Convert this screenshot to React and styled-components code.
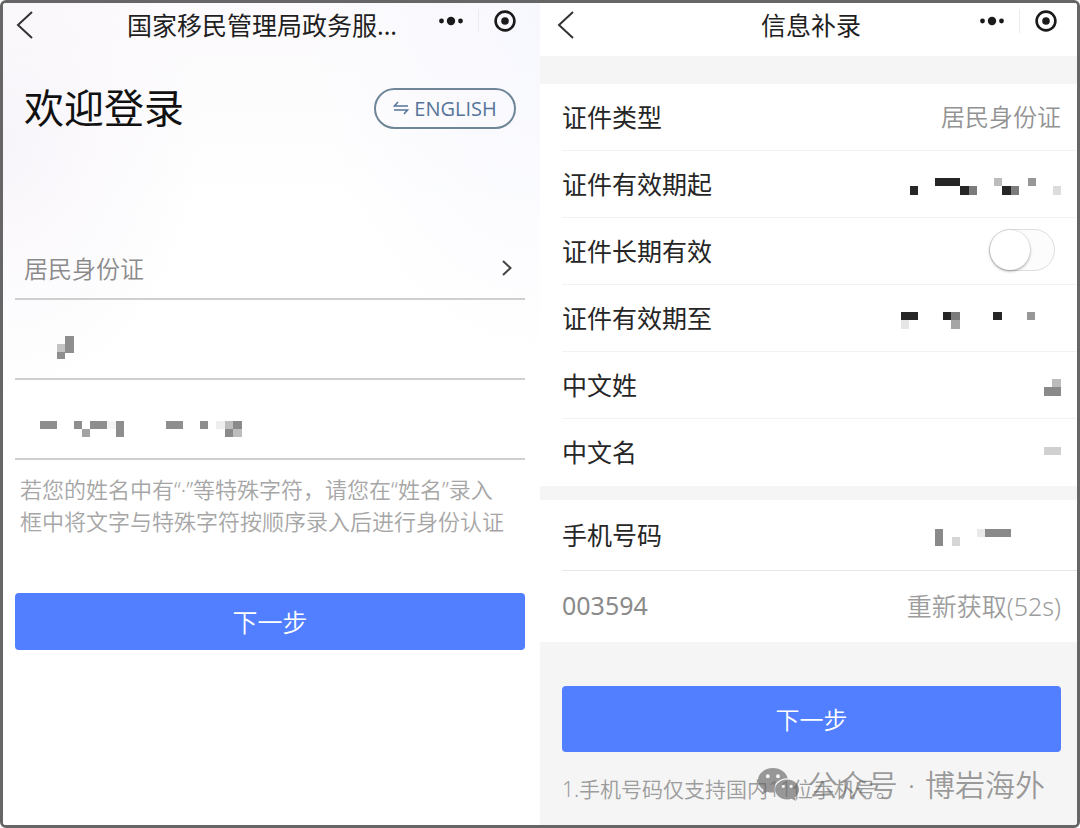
import styled, { createGlobalStyle } from "styled-components";
import { useState } from "react";

const GlobalStyle = createGlobalStyle`
  * {
    box-sizing: border-box;
  }
  body {
    margin: 0;
    background: #fff;
    color: #1f1f1f;
    font-family: "Noto Sans", "Noto Sans CJK SC", sans-serif;
  }
  button, input, select {
    font-family: inherit;
    margin: 0;
  }
`;

const Frame = styled.div`
  display: grid;
  grid-template-columns: 1fr 1fr;
  min-height: 100vh;
  border: 3px solid #666;
  border-radius: 6px;
  overflow: hidden;
`;

const Panel = styled.section`
  display: flex;
  flex-direction: column;
  min-width: 0;
`;

const LoginPanel = styled(Panel)`
  background:
    radial-gradient(ellipse at 0 140px, #f8f5fa, rgba(255, 255, 255, 0) 200px),
    radial-gradient(ellipse at 100% 0, #f7f8fe, rgba(255, 255, 255, 0) 240px),
    linear-gradient(#fcfafc, #fff 200px);
`;

const InfoPanel = styled(Panel)`
  background: #f5f5f5;
`;

const Header = styled.header`
  display: grid;
  grid-template-columns: 1fr auto 1fr;
  align-items: start;
  height: 53px;
  padding: ${props => props.$wide ? '0 20px 0 17px' : '0 24px 0 13px'};
  background: ${props => props.$solid ? '#fff' : 'transparent'};
`;

const Title = styled.h1`
  margin: 0;
  padding: ${props => props.$truncated ? '0 8px 0 0' : '0 0 0 8px'};
  font-size: 25px;
  font-weight: 400;
  line-height: 44px;
  white-space: nowrap;
`;

const IconButton = styled.button`
  display: flex;
  align-items: center;
  justify-self: start;
  border: none;
  padding: 0;
  background: none;
  cursor: pointer;
`;

const BackButton = styled(IconButton)`
  height: 44px;
`;

const Capsule = styled.div`
  display: flex;
  align-items: center;
  justify-self: end;
  height: 36px;
`;

const CapsuleDivider = styled.span`
  width: 1px;
  height: 24px;
  margin: 0 15px;
  background: #ececee;
`;

const Welcome = styled.div`
  display: flex;
  align-items: center;
  justify-content: space-between;
  padding: 22px 24px 0 21px;
`;

const WelcomeTitle = styled.h2`
  margin: 0;
  font-size: 40px;
  font-weight: 400;
  line-height: 60px;
  color: #111;
`;

const LanguageButton = styled.button`
  display: flex;
  align-items: center;
  justify-content: center;
  gap: 5px;
  width: 142px;
  height: 41px;
  border: 2px solid #6f8698;
  border-radius: 21px;
  padding: 0;
  background: transparent;
  color: #56749a;
  font-family: "Open Sans", sans-serif;
  font-size: 20px;
  cursor: pointer;
`;

const Form = styled.form`
  padding: 100px 15px 0 12px;
`;

const Field = styled.div`
  position: relative;
  display: flex;
  align-items: center;
  height: ${props => props.$first ? '62px' : '80px'};
  border-bottom: 2px solid #cfcfcf;
`;

const FieldInput = styled.input`
  width: 100%;
  height: 100%;
  border: none;
  outline: none;
  padding: 0 9px;
  background: transparent;
  font-size: 24px;
`;

const FieldSelect = styled.select`
  width: 100%;
  height: 100%;
  appearance: none;
  border: none;
  outline: none;
  padding: 0 9px;
  background: transparent;
  color: #8a8a8a;
  font-size: 24px;
  font-weight: 350;
`;

const SelectArrow = styled.svg`
  position: absolute;
  right: 12px;
  pointer-events: none;
`;

const FieldMask = styled.span`
  position: absolute;
  left: 25px;
  top: 20px;
  bottom: 0;
  display: flex;
  align-items: center;
  pointer-events: none;
`;

const Hint = styled.p`
  margin: 0;
  padding: 13px 16px 0 5px;
  color: #a6a6a6;
  font-size: 22px;
  font-weight: 350;
  line-height: 32px;
`;

const PrimaryButton = styled.button`
  display: block;
  width: 100%;
  height: ${props => props.$tall ? '66px' : '57px'};
  border: none;
  border-radius: 4px;
  padding: 0 0 2px;
  background: #517fff;
  color: #fff;
  font-size: ${props => props.$tall ? '24px' : '25px'};
  font-weight: 350;
  cursor: pointer;
`;

const SubmitRow = styled.div`
  padding-top: 56px;
`;

const Group = styled.div`
  margin-top: ${props => props.$spacing};
  background: #fff;
`;

const Row = styled.div`
  display: flex;
  align-items: center;
  justify-content: space-between;
  height: ${props => props.$tall ? '71px' : '67px'};
  margin-left: 22px;
  padding: 0 16px 3px 0;
  border-bottom: 1px solid ${props => props.$tall ? '#e6e6e6' : '#f3f3f3'};
  &:last-child {
    border-bottom: none;
  }
`;

const RowLabel = styled.label`
  font-size: 25px;
  color: #262626;
`;

const RowValue = styled.span`
  font-size: 24px;
  font-weight: 350;
  color: #929292;
`;

const RowMask = styled.span`
  display: flex;
  padding-top: 8px;
`;

const CodeInput = styled.input`
  flex: 1;
  min-width: 0;
  height: 100%;
  border: none;
  outline: none;
  padding: 0;
  background: transparent;
  color: #8a8a8a;
  font-size: 25px;
`;

const ResendButton = styled.button`
  border: none;
  padding: 0;
  background: none;
  color: #9c9c9c;
  font-size: 25px;
  font-weight: 350;
`;

const Toggle = styled.input`
  appearance: none;
  display: flex;
  width: 66px;
  height: 42px;
  margin: 0 6px 0 0;
  border: 1px solid #dedede;
  border-radius: 21px;
  background: ${props => props.checked ? '#517fff' : '#fcfcfc'};
  cursor: pointer;
  &::before {
    content: "";
    width: 40px;
    height: 40px;
    margin-left: ${props => props.checked ? '24px' : '0'};
    border-radius: 50%;
    background: #fff;
    box-shadow: 0 1px 3px rgba(0, 0, 0, 0.4);
  }
`;

const Footer = styled.footer`
  position: relative;
  flex: 1;
  padding: 44px 16px 0 22px;
`;

const Note = styled.p`
  margin: 0;
  padding-top: 21px;
  color: #9c9c9c;
  font-size: 21px;
  font-weight: 350;
  line-height: 32px;
  white-space: nowrap;
`;

const Watermark = styled.div`
  position: absolute;
  right: 32px;
  bottom: 20px;
  display: flex;
  align-items: center;
  gap: 8px;
  color: rgba(100, 100, 100, 0.65);
  font-size: 30px;
  font-weight: 350;
  line-height: 40px;
  white-space: nowrap;
`;

const WatermarkText = styled.span`
  display: flex;
  gap: 10px;
`;

// cells are [column, row, columns, rows, colour]
function Mosaic({cols, rows, cells}) {
  return (
    <svg
      width={cols * 8.4}
      height={rows * 8.4}
      viewBox={`0 0 ${cols} ${rows}`}
      shapeRendering="crispEdges"
      aria-hidden="true"
    >
      {cells.map(([x, y, w, h, fill]) => (
        <rect key={x + '-' + y} x={x} y={y} width={w} height={h} fill={fill} />
      ))}
    </svg>
  );
}

const nameCells = [
  [2, 0.9, 1, 1, '#c4c4c4'], [2, 1.9, 1, 0.8, '#8e8e8e'], [3, 0, 1, 2, '#8e8e8e'],
];

const idCells = [
  [0, 0, 2, 1, '#8e8e8e'], [4, 0, 1, 1, '#8e8e8e'], [5, 1, 1, 1, '#a3a3a3'],
  [6, 0, 2, 1, '#8e8e8e'], [8, 0, 1, 1, '#f3f3f3'], [9, 0, 1, 2, '#8e8e8e'],
  [15, 0, 2, 1, '#8e8e8e'], [19, 0, 1, 1, '#8e8e8e'], [21, 0, 1, 1, '#eeeeee'],
  [22, 0, 1, 1, '#bdbdbd'], [23, 0, 1, 1, '#8a8a8a'], [22, 1, 1, 1, '#8a8a8a'],
  [23, 1, 1, 1, '#bdbdbd'],
];

const startCells = [
  [0, 1, 1, 1, '#262626'], [3, 0, 3, 1, '#262626'], [6, 1, 1, 1, '#262626'],
  [7, 1, 1, 1, '#7b7b7b'], [10, 0, 1, 1, '#bcbcbc'], [11, 1, 1, 1, '#262626'],
  [12, 1, 1, 1, '#7b7b7b'], [14, 0, 1, 1, '#979797'], [17, 1, 1, 1, '#dcdcdc'],
];

const endCells = [
  [0, 0, 2, 1, '#262626'], [0, 1, 1, 1, '#e6e6e6'], [5, 0, 1, 1, '#262626'],
  [6, 0, 1, 1, '#7b7b7b'], [6, 1, 1, 1, '#a6a6a6'], [11, 0, 1, 1, '#262626'],
  [15, 0, 1, 1, '#979797'],
];

const surnameCells = [[1, 0, 1, 1, '#bcbcbc'], [0, 1, 2, 1, '#8a8a8a']];

const givenNameCells = [[0, 0, 2, 1, '#d0d0d0']];

const phoneCells = [
  [0, 0, 1, 2, '#8a8a8a'], [2, 1, 1, 1, '#d6d6d6'], [5, 0, 1, 1, '#e9e9e9'],
  [6, 0, 3, 1, '#8a8a8a'],
];

function NavBar({title, wide, solid}) {
  return (
    <Header $wide={wide} $solid={solid}>
      <BackButton type="button" aria-label="返回">
        <svg width="18" height="28" viewBox="0 0 18 28" fill="none" stroke="#333" strokeWidth="2">
          <path d="M16 1 L2 14 L16 27" />
        </svg>
      </BackButton>
      <Title $truncated={!wide}>{title}</Title>
      <Capsule>
        <IconButton type="button" aria-label="更多">
          <svg width="24" height="10" viewBox="0 0 24 10" fill="#1a1a1a">
            <circle cx="2.5" cy="5" r="2.4" />
            <circle cx="12" cy="5" r="4.2" />
            <circle cx="21.5" cy="5" r="2.4" />
          </svg>
        </IconButton>
        <CapsuleDivider />
        <IconButton type="button" aria-label="关闭">
          <svg width="22" height="22" viewBox="0 0 22 22" fill="none">
            <circle cx="11" cy="11" r="9.4" stroke="#1a1a1a" strokeWidth="2.6" />
            <circle cx="11" cy="11" r="3.8" fill="#1a1a1a" />
          </svg>
        </IconButton>
      </Capsule>
    </Header>
  );
}

function Login() {
  return (
    <LoginPanel>
      <NavBar title="国家移民管理局政务服..." />
      <Welcome>
        <WelcomeTitle>欢迎登录</WelcomeTitle>
        <LanguageButton type="button">
          <svg width="16" height="14" viewBox="0 0 16 14" fill="none" stroke="currentColor" strokeWidth="1.5">
            <path d="M5 1 L1.5 5 H15 M1 9 H14.5 L11 13" />
          </svg>
          ENGLISH
        </LanguageButton>
      </Welcome>
      <Form onSubmit={e => e.preventDefault()}>
        <Field $first>
          <FieldSelect aria-label="证件类型" defaultValue="id">
            <option value="id">居民身份证</option>
          </FieldSelect>
          <SelectArrow width="12" height="16" viewBox="0 0 12 16" fill="none" stroke="#444" strokeWidth="2">
            <path d="M2 1 L9.5 8 L2 15" />
          </SelectArrow>
        </Field>
        <Field>
          <FieldInput aria-label="姓名" />
          <FieldMask><Mosaic cols={4} rows={3} cells={nameCells} /></FieldMask>
        </Field>
        <Field>
          <FieldInput aria-label="证件号码" />
          <FieldMask><Mosaic cols={24} rows={2} cells={idCells} /></FieldMask>
        </Field>
        <Hint>若您的姓名中有“·”等特殊字符，请您在“姓名”录入框中将文字与特殊字符按顺序录入后进行身份认证</Hint>
        <SubmitRow>
          <PrimaryButton type="submit">下一步</PrimaryButton>
        </SubmitRow>
      </Form>
    </LoginPanel>
  );
}

function Info() {
  const [longTerm, setLongTerm] = useState(false);

  return (
    <InfoPanel>
      <NavBar title="信息补录" wide solid />
      <Group $spacing="28px">
        <Row>
          <RowLabel as="span">证件类型</RowLabel>
          <RowValue>居民身份证</RowValue>
        </Row>
        <Row>
          <RowLabel as="span">证件有效期起</RowLabel>
          <RowMask><Mosaic cols={18} rows={2} cells={startCells} /></RowMask>
        </Row>
        <Row>
          <RowLabel htmlFor="long-term">证件长期有效</RowLabel>
          <Toggle
            id="long-term"
            type="checkbox"
            checked={longTerm}
            onChange={e => setLongTerm(e.target.checked)}
          />
        </Row>
        <Row>
          <RowLabel as="span">证件有效期至</RowLabel>
          <RowMask><Mosaic cols={19} rows={2} cells={endCells} /></RowMask>
        </Row>
        <Row>
          <RowLabel as="span">中文姓</RowLabel>
          <RowMask><Mosaic cols={2} rows={2} cells={surnameCells} /></RowMask>
        </Row>
        <Row>
          <RowLabel as="span">中文名</RowLabel>
          <Mosaic cols={2} rows={1} cells={givenNameCells} />
        </Row>
      </Group>
      <Group $spacing="14px">
        <Row $tall>
          <RowLabel as="span">手机号码</RowLabel>
          <RowMask><Mosaic cols={15} rows={2} cells={phoneCells} /></RowMask>
        </Row>
        <Row $tall>
          <CodeInput aria-label="验证码" defaultValue="003594" />
          <ResendButton type="button" disabled>重新获取(52s)</ResendButton>
        </Row>
      </Group>
      <Footer>
        <PrimaryButton type="button" $tall>下一步</PrimaryButton>
        <Note>1.手机号码仅支持国内11位手机号。</Note>
        <Watermark>
          <svg width="42" height="34" viewBox="0 0 42 34" fill="currentColor" aria-hidden="true">
            <path
              fillRule="evenodd"
              d="M15 0 C6.7 0 0 5.5 0 12.3 C0 16.2 2.2 19.6 5.6 21.9 L4.2 26.2 L9.2 23.7 C11 24.2 12.9 24.6 15 24.6 L16.2 24.5 C15.9 23.5 15.8 22.5 15.8 21.5 C15.8 15.3 21.7 10.3 29 10.3 L29.7 10.3 C28.4 4.4 22.3 0 15 0 Z M9.8 6.2 a2 2 0 1 1 0 4 a2 2 0 1 1 0 -4 Z M20 6.2 a2 2 0 1 1 0 4 a2 2 0 1 1 0 -4 Z"
            />
            <path
              fillRule="evenodd"
              d="M41 21.5 C41 16 35.6 11.6 29.2 11.6 C22.4 11.6 17.2 16 17.2 21.5 C17.2 27 22.4 31.4 29.2 31.4 C30.8 31.4 32.3 31.1 33.7 30.7 L38 33 L36.8 29.3 C39.4 27.4 41 24.6 41 21.5 Z M25.3 16.7 a1.6 1.6 0 1 1 0 3.2 a1.6 1.6 0 1 1 0 -3.2 Z M33.1 16.7 a1.6 1.6 0 1 1 0 3.2 a1.6 1.6 0 1 1 0 -3.2 Z"
            />
          </svg>
          <WatermarkText>
            <span>公众号</span>
            <span>·</span>
            <span>博岩海外</span>
          </WatermarkText>
        </Watermark>
      </Footer>
    </InfoPanel>
  );
}

export default function App() {
  return (
    <>
      <GlobalStyle />
      <Frame>
        <Login />
        <Info />
      </Frame>
    </>
  );
}
